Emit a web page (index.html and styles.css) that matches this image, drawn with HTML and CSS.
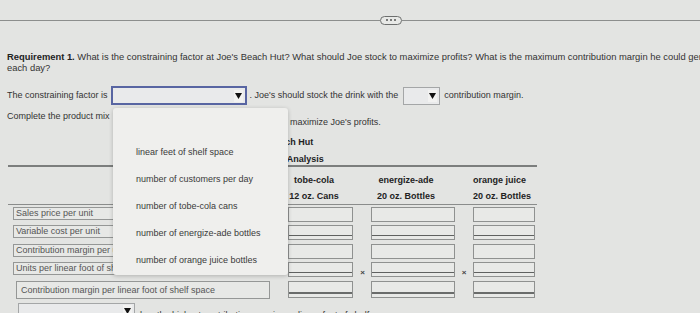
FILE: index.html
```html
<!DOCTYPE html>
<html>
<head>
<meta charset="utf-8">
<link rel="stylesheet" href="styles.css">
</head>
<body>
<div class="topbar">
  <div class="rule rule-left"></div>
  <div class="pill"><i></i><i></i><i></i></div>
  <div class="rule rule-right"></div>
</div>
<main class="content">
  <p class="req"><b>Requirement 1.</b> What is the constraining factor at Joe's Beach Hut? What should Joe stock to maximize profits? What is the maximum contribution margin he could generate each day?</p>

  <div class="line-constraint">
    <span>The constraining factor is</span>
    <span class="select select-big"><span class="arrow"><svg width="7" height="7" viewBox="0 0 7 7"><path d="M0 1H7L3.5 7Z" fill="#111"/></svg></span></span>
    <span>. Joe's should stock the drink with the</span>
    <span class="select select-small"><span class="arrow"><svg width="7" height="7" viewBox="0 0 7 7"><path d="M0 1H7L3.5 7Z" fill="#111"/></svg></span></span>
    <span>contribution margin.</span>
  </div>

  <div class="mix">
    <span class="mix-left">Complete the product mix</span>
    <span class="mix-right">maximize Joe's profits.</span>
  </div>

  <section class="table">
    <div class="titles">
      <div class="title">Joe's Beach Hut</div>
      <div class="title">Product Mix Analysis</div>
    </div>
    <div class="grid head">
      <div></div><div class="h">tobe-cola</div><div></div><div class="h">energize-ade</div><div></div><div class="h">orange juice</div>
      <div></div><div class="h">12 oz. Cans</div><div></div><div class="h">20 oz. Bottles</div><div></div><div class="h">20 oz. Bottles</div>
    </div>
    <div class="grid body">
      <div class="label">Sales price per unit</div><div class="cell"></div><div></div><div class="cell"></div><div></div><div class="cell"></div>
      <div class="label">Variable cost per unit</div><div class="cell under"></div><div></div><div class="cell under"></div><div></div><div class="cell under"></div>
      <div class="label">Contribution margin per unit</div><div class="cell"></div><div></div><div class="cell"></div><div></div><div class="cell"></div>
      <div class="label">Units per linear foot of shelf space</div><div class="cell under"></div><div class="times">×</div><div class="cell under"></div><div class="times">×</div><div class="cell under"></div>
      <div class="label label-total">Contribution margin per linear foot of shelf space</div><div class="cell total"></div><div></div><div class="cell total"></div><div></div><div class="cell total"></div>
    </div>
  </section>

  <div class="bottom-row">
    <span class="select select-bottom"><span class="arrow"><svg width="7" height="7" viewBox="0 0 7 7"><path d="M0 1H7L3.5 7Z" fill="#111"/></svg></span></span>
    <span class="bottom-text">has the highest contribution margin per linear foot of shelf space.</span>
  </div>

  <ul class="popup">
    <li class="opt"></li>
    <li class="opt">linear feet of shelf space</li>
    <li class="opt">number of customers per day</li>
    <li class="opt">number of tobe-cola cans</li>
    <li class="opt">number of energize-ade bottles</li>
    <li class="opt">number of orange juice bottles</li>
  </ul>
</main>
</body>
</html>
```

FILE: styles.css
```css
* { box-sizing: border-box; margin: 0; padding: 0; }
html, body { width: 700px; height: 313px; overflow: hidden; }
body {
  background: #e3e4e2;
  font-family: "Liberation Sans", Arial, sans-serif;
  font-size: 9px;
  line-height: 11px;
  color: #333;
}
.topbar { height: 40px; display: flex; align-items: center; }
.rule { height: 1px; background: #8c8e8d; }
.rule-left { width: 380px; }
.rule-right { flex: 1; }
.pill {
  width: 22px; height: 9px;
  border: 1px solid #6d6f6e; border-radius: 5px;
  background: #e8e9e7;
  display: flex; align-items: center; justify-content: center; gap: 2px;
}
.pill i { width: 2px; height: 2px; background: #555; border-radius: 1px; }

.content { position: relative; padding: 11px 0 0 7px; }
.req { width: 728px; font-size: 9.4px; }
.req b { color: #222; }

.line-constraint {
  display: flex; align-items: center;
  margin-top: 13px; height: 19px; white-space: nowrap;
}
.select {
  display: flex; align-items: center; justify-content: flex-end;
  background: #e9eaeb; border: 1px solid #a4a6a7; padding-right: 2px;
}
.select-big { width: 136px; height: 19px; margin: 0 3px 0 3px; border: 2px solid #5865a2; }
.select-small { width: 37px; height: 18px; margin: 0 4px 0 5px; }
.arrow {
  width: 9px; height: 12px;
  display: flex; align-items: center; justify-content: center;
  background: #f2f2f1;
}
.arrow svg { display: block; }

.mix { display: flex; margin-top: 6px; height: 16px; }
.mix-left { width: 283px; }
.mix-right { padding-top: 6px; }

.table { margin-left: 1px; width: 529px; }
.titles { border-bottom: 2px solid #7c7e7d; padding: 10px 0 0 12px; }
.title { text-align: center; font-weight: bold; color: #222; height: 11px; }
.title + .title { margin-top: 6px; }

.grid { display: grid; grid-template-columns: 280px 66px 17px 84px 18px 64px; }
.head { grid-auto-rows: 16px; padding-top: 5px; border-bottom: 1px solid #8a8c8b; }
.h { text-align: center; font-weight: bold; color: #222; padding-right: 14px; align-self: center; white-space: nowrap; }

.body { grid-template-rows: 18px 18.5px 18.5px 18.5px 19px; padding-top: 2px; }
.label {
  margin-left: 5px; width: 257px; height: 13px;
  border: 1px solid #959796; background: #e7e8e6;
  color: #555; padding-left: 2px; line-height: 11px; white-space: nowrap; overflow: hidden;
}
.label-total { margin-left: 8px; width: 254px; height: 18px; line-height: 16px; padding-left: 4px; }
.cell { height: 15px; border: 1px solid #8f9190; background: #e8e9e7; }
.cell:nth-child(6n+2) { width: 65px; }
.cell:nth-child(6n) { width: 62px; }
.cell.under { box-shadow: inset 0 -3px 0 #e8e9e7, inset 0 -4px 0 #5f6160; }
.cell.total { height: 17px; box-shadow: inset 0 -3px 0 #e8e9e7, inset 0 -5px 0 #6a6c6b; }
.times { text-align: center; font-size: 8px; font-weight: bold; color: #444; align-self: end; padding-bottom: 3px; }

.bottom-row { display: flex; align-items: flex-start; height: 16px; margin-top: 3px; margin-left: 11px; white-space: nowrap; }
.select-bottom { width: 117px; height: 16px; margin-right: 5px; }
.bottom-text { padding-top: 7px; }

.popup {
  position: absolute; left: 113px; top: 68px;
  width: 175px; height: 167px;
  list-style: none;
  background: #efefed;
  border-radius: 3px;
  box-shadow: 0 1px 4px rgba(0, 0, 0, 0.22);
  padding-top: 4px;
}
.opt { height: 27px; line-height: 27px; padding-left: 23px; color: #3a3a3a; }
```
